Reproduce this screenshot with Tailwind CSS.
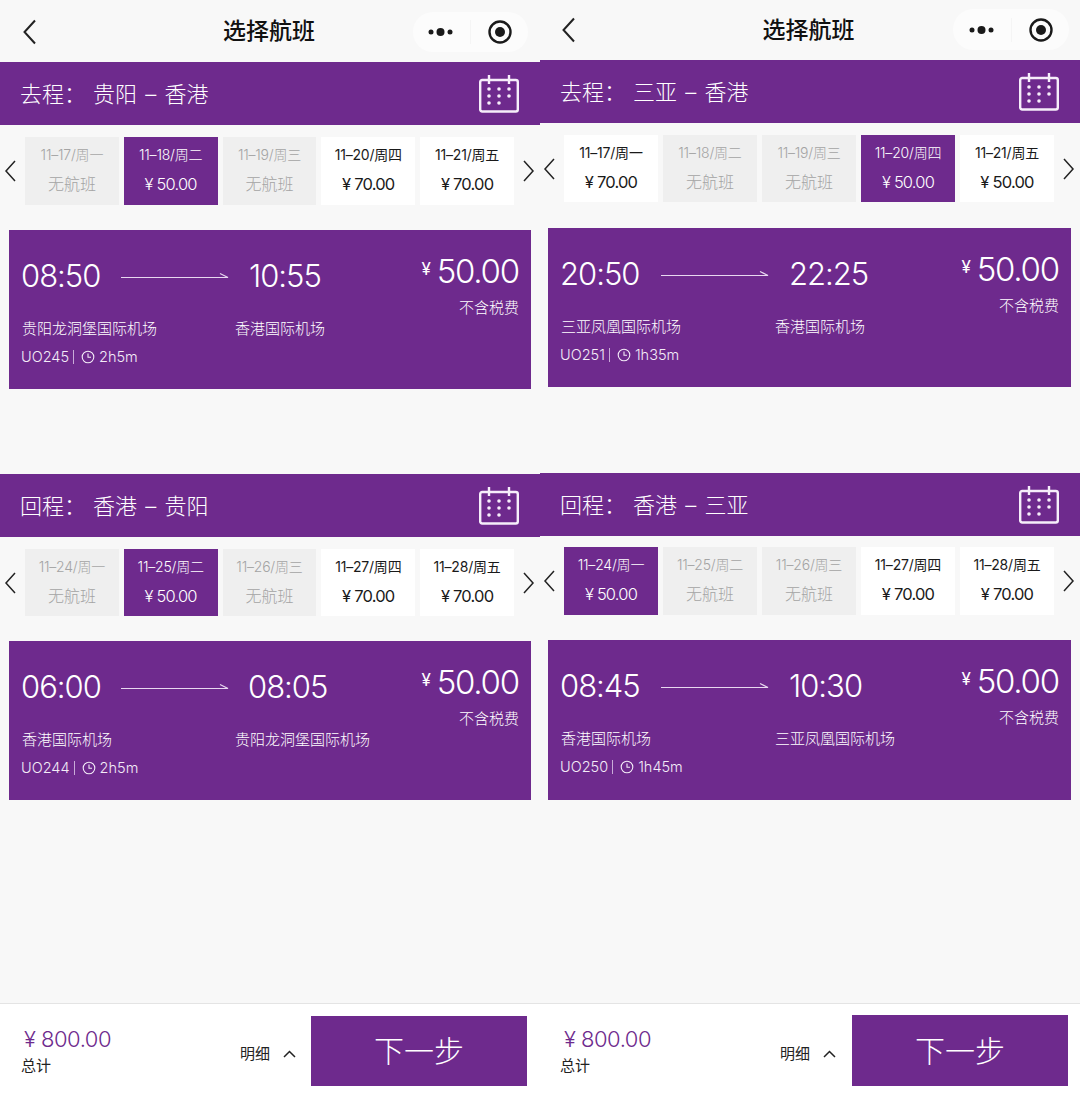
<!doctype html>
<html lang="zh">
<head>
<meta charset="utf-8">
<script src="https://cdn.jsdelivr.net/npm/@tailwindcss/browser@4"></script>
<title>选择航班</title>
</head>
<body class="m-0 bg-[#f8f8f8]">
<div class="flex w-[1080px] h-[1097px] overflow-hidden font-['Inter','Noto_Sans_CJK_SC',sans-serif]">

<!-- LEFT -->
<section class="w-[540px] h-full flex flex-col bg-[#f8f8f8]">
  <header class="h-[62px] shrink-0 relative flex items-center justify-center">
    <svg class="absolute left-[22px] top-[19px]" width="16" height="26" viewBox="0 0 16 26" fill="none" stroke="#222" stroke-width="2"><path d="M13 1.500 2.500 13 13 24.500"/></svg>
    <span class="pr-[2px] text-[23px] font-medium leading-none text-[#111]">选择航班</span>
    <div class="absolute left-[413px] top-[12px] w-[115px] h-[40px] rounded-full bg-[#fcfcfc] flex items-center">
      <svg class="ml-[14px]" width="28" height="12" viewBox="0 0 28 12" fill="#1a1a1a"><circle cx="4" cy="6" r="2.500"/><circle cx="13.500" cy="6" r="4"/><circle cx="23" cy="6" r="2.500"/></svg>
      <span class="ml-[15px] w-px h-[24px] bg-[#f5f5f5]"></span>
      <svg class="ml-[16px]" width="26" height="26" viewBox="0 0 26 26"><circle cx="13" cy="13" r="10.500" fill="none" stroke="#1a1a1a" stroke-width="2.400"/><circle cx="13" cy="13" r="5" fill="#1a1a1a"/></svg>
    </div>
  </header>

  <div class="h-[63px] shrink-0 bg-[#6e2a8d] flex items-center justify-between pl-[20px] pr-[21px] text-white">
    <div class="flex text-[22px] font-light leading-none text-white [word-spacing:2px]"><span class="w-[73px]">去程：</span><span>贵阳 – 香港</span></div>
    <svg width="40" height="38" viewBox="0 0 40 38" fill="none" stroke="#f6eefa" stroke-width="2.400"><rect x="1.200" y="5" width="37.600" height="31.500" rx="2"/><path d="M10 0v9M30 0v9"/><g fill="#f6eefa" stroke="none"><circle cx="10" cy="14" r="1.800"/><circle cx="20" cy="14" r="1.800"/><circle cx="30" cy="14" r="1.800"/><circle cx="10" cy="21" r="1.800"/><circle cx="20" cy="21" r="1.800"/><circle cx="30" cy="21" r="1.800"/><circle cx="10" cy="28" r="1.800"/><circle cx="20" cy="28" r="1.800"/></g></svg>
  </div>

  <div class="mt-[12px] h-[68px] shrink-0 flex items-center">
    <svg class="w-[25px] shrink-0" width="25" height="22" viewBox="0 0 25 22" fill="none" stroke="#222" stroke-width="1.500"><path d="M15 1 6 11l9 10"/></svg>
    <div class="flex gap-[5px]">
      <div class="w-[93.800px] h-[68px] pb-px flex flex-col items-center justify-center bg-[#efefef] text-[#a4a4a4]"><span class="text-[14px] font-light leading-[20px] tracking-[-0.2px]">11–17/周一</span><span class="text-[16px] font-light leading-[24px] mt-[7px]">无航班</span></div>
      <div class="w-[93.800px] h-[68px] pb-px flex flex-col items-center justify-center bg-[#6e2a8d] text-white"><span class="text-[14px] font-light leading-[20px] tracking-[-0.2px]">11–18/周二</span><span class="text-[16.500px] font-light tracking-[-0.8px] leading-[24px] mt-[7px]">¥ 50.00</span></div>
      <div class="w-[93.800px] h-[68px] pb-px flex flex-col items-center justify-center bg-[#efefef] text-[#a4a4a4]"><span class="text-[14px] font-light leading-[20px] tracking-[-0.2px]">11–19/周三</span><span class="text-[16px] font-light leading-[24px] mt-[7px]">无航班</span></div>
      <div class="w-[93.800px] h-[68px] pb-px flex flex-col items-center justify-center bg-white text-[#1a1a1a]"><span class="text-[14px] leading-[20px] tracking-[-0.2px]">11–20/周四</span><span class="text-[16.500px] tracking-[-0.8px] leading-[24px] mt-[7px]">¥ 70.00</span></div>
      <div class="w-[93.800px] h-[68px] pb-px flex flex-col items-center justify-center bg-white text-[#1a1a1a]"><span class="text-[14px] leading-[20px] tracking-[-0.2px]">11–21/周五</span><span class="text-[16.500px] tracking-[-0.8px] leading-[24px] mt-[7px]">¥ 70.00</span></div>
    </div>
    <svg class="w-[25px] shrink-0" width="25" height="22" viewBox="0 0 25 22" fill="none" stroke="#222" stroke-width="1.500"><path d="M10 1l9 10-9 10"/></svg>
  </div>

  <article class="mt-[25px] ml-[9px] w-[522px] h-[159px] shrink-0 bg-[#6e2a8d] flex justify-between px-[12px] text-white">
    <div>
      <div class="mt-[26px] h-[38px] flex items-center text-[31px] font-light tracking-[-1px] leading-none text-white">
        <span class="w-[100px]">08:50</span>
        <svg width="108" height="8" viewBox="0 0 108 8" fill="none" stroke="#e8d8f0" stroke-width="1.200"><path d="M0 6.500h107L99 2.500"/></svg>
        <span class="ml-[20px]">10:55</span>
      </div>
      <div class="mt-[24px] h-[22px] flex text-[15px] font-light leading-[22px] text-white"><span class="w-[214px] pl-px">贵阳龙洞堡国际机场</span><span>香港国际机场</span></div>
      <div class="mt-[7px] h-[20px] flex items-center text-[14.500px] font-light leading-none text-[#f4ecf8]">
        <span>UO245</span><span class="mx-[4px] w-px h-[14px] bg-[#c9abd8]"></span>
        <svg class="ml-[3px]" width="14" height="14" viewBox="0 0 14 14" fill="none" stroke="#f4ecf8" stroke-width="1.100"><circle cx="7" cy="7" r="5.800"/><path d="M7 3.500V7.300H10"/></svg>
        <span class="ml-[4px]">2h5m</span>
      </div>
    </div>
    <div class="flex flex-col items-end">
      <div class="mt-[21px] h-[40px] flex items-center text-[33px] font-light tracking-[-1.200px] leading-none text-white"><span class="text-[17px] font-normal mr-[7px] -mt-[3px]">¥</span>50.00</div>
      <span class="mt-[6px] h-[22px] text-[15px] font-light leading-[22px] text-white">不含税费</span>
    </div>
  </article>

  <div class="mt-[85px] h-[63px] shrink-0 bg-[#6e2a8d] flex items-center justify-between pl-[20px] pr-[21px] text-white">
    <div class="flex text-[22px] font-light leading-none text-white [word-spacing:2px]"><span class="w-[73px]">回程：</span><span>香港 – 贵阳</span></div>
    <svg width="40" height="38" viewBox="0 0 40 38" fill="none" stroke="#f6eefa" stroke-width="2.400"><rect x="1.200" y="5" width="37.600" height="31.500" rx="2"/><path d="M10 0v9M30 0v9"/><g fill="#f6eefa" stroke="none"><circle cx="10" cy="14" r="1.800"/><circle cx="20" cy="14" r="1.800"/><circle cx="30" cy="14" r="1.800"/><circle cx="10" cy="21" r="1.800"/><circle cx="20" cy="21" r="1.800"/><circle cx="30" cy="21" r="1.800"/><circle cx="10" cy="28" r="1.800"/><circle cx="20" cy="28" r="1.800"/></g></svg>
  </div>

  <div class="mt-[12px] h-[67px] shrink-0 flex items-center">
    <svg class="w-[25px] shrink-0" width="25" height="22" viewBox="0 0 25 22" fill="none" stroke="#222" stroke-width="1.500"><path d="M15 1 6 11l9 10"/></svg>
    <div class="flex gap-[5px]">
      <div class="w-[93.800px] h-[67px] pb-px flex flex-col items-center justify-center bg-[#efefef] text-[#a4a4a4]"><span class="text-[14px] font-light leading-[20px] tracking-[-0.2px]">11–24/周一</span><span class="text-[16px] font-light leading-[24px] mt-[7px]">无航班</span></div>
      <div class="w-[93.800px] h-[67px] pb-px flex flex-col items-center justify-center bg-[#6e2a8d] text-white"><span class="text-[14px] font-light leading-[20px] tracking-[-0.2px]">11–25/周二</span><span class="text-[16.500px] font-light tracking-[-0.8px] leading-[24px] mt-[7px]">¥ 50.00</span></div>
      <div class="w-[93.800px] h-[67px] pb-px flex flex-col items-center justify-center bg-[#efefef] text-[#a4a4a4]"><span class="text-[14px] font-light leading-[20px] tracking-[-0.2px]">11–26/周三</span><span class="text-[16px] font-light leading-[24px] mt-[7px]">无航班</span></div>
      <div class="w-[93.800px] h-[67px] pb-px flex flex-col items-center justify-center bg-white text-[#1a1a1a]"><span class="text-[14px] leading-[20px] tracking-[-0.2px]">11–27/周四</span><span class="text-[16.500px] tracking-[-0.8px] leading-[24px] mt-[7px]">¥ 70.00</span></div>
      <div class="w-[93.800px] h-[67px] pb-px flex flex-col items-center justify-center bg-white text-[#1a1a1a]"><span class="text-[14px] leading-[20px] tracking-[-0.2px]">11–28/周五</span><span class="text-[16.500px] tracking-[-0.8px] leading-[24px] mt-[7px]">¥ 70.00</span></div>
    </div>
    <svg class="w-[25px] shrink-0" width="25" height="22" viewBox="0 0 25 22" fill="none" stroke="#222" stroke-width="1.500"><path d="M10 1l9 10-9 10"/></svg>
  </div>

  <article class="mt-[25px] ml-[9px] w-[522px] h-[159px] shrink-0 bg-[#6e2a8d] flex justify-between px-[12px] text-white">
    <div>
      <div class="mt-[26px] h-[38px] flex items-center text-[31px] font-light tracking-[-1px] leading-none text-white">
        <span class="w-[100px]">06:00</span>
        <svg width="108" height="8" viewBox="0 0 108 8" fill="none" stroke="#e8d8f0" stroke-width="1.200"><path d="M0 6.500h107L99 2.500"/></svg>
        <span class="ml-[19px]">08:05</span>
      </div>
      <div class="mt-[24px] h-[22px] flex text-[15px] font-light leading-[22px] text-white"><span class="w-[214px] pl-px">香港国际机场</span><span>贵阳龙洞堡国际机场</span></div>
      <div class="mt-[7px] h-[20px] flex items-center text-[14.500px] font-light leading-none text-[#f4ecf8]">
        <span>UO244</span><span class="mx-[4px] w-px h-[14px] bg-[#c9abd8]"></span>
        <svg class="ml-[3px]" width="14" height="14" viewBox="0 0 14 14" fill="none" stroke="#f4ecf8" stroke-width="1.100"><circle cx="7" cy="7" r="5.800"/><path d="M7 3.500V7.300H10"/></svg>
        <span class="ml-[4px]">2h5m</span>
      </div>
    </div>
    <div class="flex flex-col items-end">
      <div class="mt-[21px] h-[40px] flex items-center text-[33px] font-light tracking-[-1.200px] leading-none text-white"><span class="text-[17px] font-normal mr-[7px] -mt-[3px]">¥</span>50.00</div>
      <span class="mt-[6px] h-[22px] text-[15px] font-light leading-[22px] text-white">不含税费</span>
    </div>
  </article>

  <footer class="mt-auto h-[94px] shrink-0 bg-white border-t border-[#e4e4e4] flex items-start relative">
    <div class="ml-[21px] w-[219px]">
      <div class="mt-[22px] h-[26px] text-[22px] font-light tracking-[-0.5px] leading-[26px] text-[#6e2a8d] pl-[3px]">¥ 800.00</div>
      <div class="mt-[4px] text-[15px] leading-[20px] text-[#222]">总计</div>
    </div>
    <div class="w-[71px] mt-[40px] flex items-center text-[15px] leading-[20px] text-[#222]">
      <span>明细</span>
      <svg class="ml-[13px]" width="13" height="8" viewBox="0 0 13 8" fill="none" stroke="#222" stroke-width="1.500"><path d="M1 7l5.500-5.500L12 7"/></svg>
    </div>
    <button class="mt-[12px] w-[216px] h-[70px] bg-[#6e2a8d] text-white text-[30px] font-light leading-none flex items-center justify-center">下一步</button>
  </footer>
</section>

<!-- RIGHT -->
<section class="w-[540px] h-full flex flex-col bg-[#f8f8f8]">
  <header class="h-[60px] shrink-0 relative flex items-center justify-center">
    <svg class="absolute left-[21px] top-[17px]" width="16" height="26" viewBox="0 0 16 26" fill="none" stroke="#222" stroke-width="2"><path d="M13 1.500 2.500 13 13 24.500"/></svg>
    <span class="pr-[3px] text-[23px] font-medium leading-none text-[#111]">选择航班</span>
    <div class="absolute left-[413px] top-[9px] w-[116px] h-[41px] rounded-full bg-[#fcfcfc] flex items-center">
      <svg class="ml-[15px]" width="28" height="12" viewBox="0 0 28 12" fill="#1a1a1a"><circle cx="4" cy="6" r="2.500"/><circle cx="13.500" cy="6" r="4"/><circle cx="23" cy="6" r="2.500"/></svg>
      <span class="ml-[15px] w-px h-[24px] bg-[#f5f5f5]"></span>
      <svg class="ml-[16px]" width="26" height="26" viewBox="0 0 26 26"><circle cx="13" cy="13" r="10.500" fill="none" stroke="#1a1a1a" stroke-width="2.400"/><circle cx="13" cy="13" r="5" fill="#1a1a1a"/></svg>
    </div>
  </header>

  <div class="h-[63px] shrink-0 bg-[#6e2a8d] flex items-center justify-between pl-[20px] pr-[21px] text-white">
    <div class="flex text-[22px] font-light leading-none text-white [word-spacing:2px]"><span class="w-[73px]">去程：</span><span>三亚 – 香港</span></div>
    <svg width="40" height="38" viewBox="0 0 40 38" fill="none" stroke="#f6eefa" stroke-width="2.400"><rect x="1.200" y="5" width="37.600" height="31.500" rx="2"/><path d="M10 0v9M30 0v9"/><g fill="#f6eefa" stroke="none"><circle cx="10" cy="14" r="1.800"/><circle cx="20" cy="14" r="1.800"/><circle cx="30" cy="14" r="1.800"/><circle cx="10" cy="21" r="1.800"/><circle cx="20" cy="21" r="1.800"/><circle cx="30" cy="21" r="1.800"/><circle cx="10" cy="28" r="1.800"/><circle cx="20" cy="28" r="1.800"/></g></svg>
  </div>

  <div class="mt-[12px] h-[67px] shrink-0 flex items-center">
    <svg class="w-[24px] shrink-0" width="24" height="22" viewBox="0 0 24 22" fill="none" stroke="#222" stroke-width="1.500"><path d="M14 1 5 11l9 10"/></svg>
    <div class="flex gap-[5px]">
      <div class="w-[94px] h-[67px] pb-px flex flex-col items-center justify-center bg-white text-[#1a1a1a]"><span class="text-[14px] leading-[20px] tracking-[-0.2px]">11–17/周一</span><span class="text-[16.500px] tracking-[-0.8px] leading-[24px] mt-[7px]">¥ 70.00</span></div>
      <div class="w-[94px] h-[67px] pb-px flex flex-col items-center justify-center bg-[#efefef] text-[#a4a4a4]"><span class="text-[14px] font-light leading-[20px] tracking-[-0.2px]">11–18/周二</span><span class="text-[16px] font-light leading-[24px] mt-[7px]">无航班</span></div>
      <div class="w-[94px] h-[67px] pb-px flex flex-col items-center justify-center bg-[#efefef] text-[#a4a4a4]"><span class="text-[14px] font-light leading-[20px] tracking-[-0.2px]">11–19/周三</span><span class="text-[16px] font-light leading-[24px] mt-[7px]">无航班</span></div>
      <div class="w-[94px] h-[67px] pb-px flex flex-col items-center justify-center bg-[#6e2a8d] text-white"><span class="text-[14px] font-light leading-[20px] tracking-[-0.2px]">11–20/周四</span><span class="text-[16.500px] font-light tracking-[-0.8px] leading-[24px] mt-[7px]">¥ 50.00</span></div>
      <div class="w-[94px] h-[67px] pb-px flex flex-col items-center justify-center bg-white text-[#1a1a1a]"><span class="text-[14px] leading-[20px] tracking-[-0.2px]">11–21/周五</span><span class="text-[16.500px] tracking-[-0.8px] leading-[24px] mt-[7px]">¥ 50.00</span></div>
    </div>
    <svg class="w-[25px] shrink-0" width="25" height="22" viewBox="0 0 25 22" fill="none" stroke="#222" stroke-width="1.500"><path d="M10 1l9 10-9 10"/></svg>
  </div>

  <article class="mt-[26px] ml-[8px] w-[523px] h-[159px] shrink-0 bg-[#6e2a8d] flex justify-between px-[12px] text-white">
    <div>
      <div class="mt-[26px] h-[38px] flex items-center text-[31px] font-light tracking-[-1px] leading-none text-white">
        <span class="w-[101px]">20:50</span>
        <svg width="108" height="8" viewBox="0 0 108 8" fill="none" stroke="#e8d8f0" stroke-width="1.200"><path d="M0 6.500h107L99 2.500"/></svg>
        <span class="ml-[20px]">22:25</span>
      </div>
      <div class="mt-[24px] h-[22px] flex text-[15px] font-light leading-[22px] text-white"><span class="w-[215px] pl-px">三亚凤凰国际机场</span><span>香港国际机场</span></div>
      <div class="mt-[7px] h-[20px] flex items-center text-[14.500px] font-light leading-none text-[#f4ecf8]">
        <span>UO251</span><span class="mx-[4px] w-px h-[14px] bg-[#c9abd8]"></span>
        <svg class="ml-[3px]" width="14" height="14" viewBox="0 0 14 14" fill="none" stroke="#f4ecf8" stroke-width="1.100"><circle cx="7" cy="7" r="5.800"/><path d="M7 3.500V7.300H10"/></svg>
        <span class="ml-[4px]">1h35m</span>
      </div>
    </div>
    <div class="flex flex-col items-end">
      <div class="mt-[21px] h-[40px] flex items-center text-[33px] font-light tracking-[-1.200px] leading-none text-white"><span class="text-[17px] font-normal mr-[7px] -mt-[3px]">¥</span>50.00</div>
      <span class="mt-[6px] h-[22px] text-[15px] font-light leading-[22px] text-white">不含税费</span>
    </div>
  </article>

  <div class="mt-[86px] h-[63px] shrink-0 bg-[#6e2a8d] flex items-center justify-between pl-[20px] pr-[21px] text-white">
    <div class="flex text-[22px] font-light leading-none text-white [word-spacing:2px]"><span class="w-[73px]">回程：</span><span>香港 – 三亚</span></div>
    <svg width="40" height="38" viewBox="0 0 40 38" fill="none" stroke="#f6eefa" stroke-width="2.400"><rect x="1.200" y="5" width="37.600" height="31.500" rx="2"/><path d="M10 0v9M30 0v9"/><g fill="#f6eefa" stroke="none"><circle cx="10" cy="14" r="1.800"/><circle cx="20" cy="14" r="1.800"/><circle cx="30" cy="14" r="1.800"/><circle cx="10" cy="21" r="1.800"/><circle cx="20" cy="21" r="1.800"/><circle cx="30" cy="21" r="1.800"/><circle cx="10" cy="28" r="1.800"/><circle cx="20" cy="28" r="1.800"/></g></svg>
  </div>

  <div class="mt-[11px] h-[68px] shrink-0 flex items-center">
    <svg class="w-[24px] shrink-0" width="24" height="22" viewBox="0 0 24 22" fill="none" stroke="#222" stroke-width="1.500"><path d="M14 1 5 11l9 10"/></svg>
    <div class="flex gap-[5px]">
      <div class="w-[94px] h-[68px] pb-px flex flex-col items-center justify-center bg-[#6e2a8d] text-white"><span class="text-[14px] font-light leading-[20px] tracking-[-0.2px]">11–24/周一</span><span class="text-[16.500px] font-light tracking-[-0.8px] leading-[24px] mt-[7px]">¥ 50.00</span></div>
      <div class="w-[94px] h-[68px] pb-px flex flex-col items-center justify-center bg-[#efefef] text-[#a4a4a4]"><span class="text-[14px] font-light leading-[20px] tracking-[-0.2px]">11–25/周二</span><span class="text-[16px] font-light leading-[24px] mt-[7px]">无航班</span></div>
      <div class="w-[94px] h-[68px] pb-px flex flex-col items-center justify-center bg-[#efefef] text-[#a4a4a4]"><span class="text-[14px] font-light leading-[20px] tracking-[-0.2px]">11–26/周三</span><span class="text-[16px] font-light leading-[24px] mt-[7px]">无航班</span></div>
      <div class="w-[94px] h-[68px] pb-px flex flex-col items-center justify-center bg-white text-[#1a1a1a]"><span class="text-[14px] leading-[20px] tracking-[-0.2px]">11–27/周四</span><span class="text-[16.500px] tracking-[-0.8px] leading-[24px] mt-[7px]">¥ 70.00</span></div>
      <div class="w-[94px] h-[68px] pb-px flex flex-col items-center justify-center bg-white text-[#1a1a1a]"><span class="text-[14px] leading-[20px] tracking-[-0.2px]">11–28/周五</span><span class="text-[16.500px] tracking-[-0.8px] leading-[24px] mt-[7px]">¥ 70.00</span></div>
    </div>
    <svg class="w-[25px] shrink-0" width="25" height="22" viewBox="0 0 25 22" fill="none" stroke="#222" stroke-width="1.500"><path d="M10 1l9 10-9 10"/></svg>
  </div>

  <article class="mt-[25px] ml-[8px] w-[523px] h-[160px] shrink-0 bg-[#6e2a8d] flex justify-between px-[12px] text-white">
    <div>
      <div class="mt-[26px] h-[38px] flex items-center text-[31px] font-light tracking-[-1px] leading-none text-white">
        <span class="w-[101px]">08:45</span>
        <svg width="108" height="8" viewBox="0 0 108 8" fill="none" stroke="#e8d8f0" stroke-width="1.200"><path d="M0 6.500h107L99 2.500"/></svg>
        <span class="ml-[20px]">10:30</span>
      </div>
      <div class="mt-[24px] h-[22px] flex text-[15px] font-light leading-[22px] text-white"><span class="w-[215px] pl-px">香港国际机场</span><span>三亚凤凰国际机场</span></div>
      <div class="mt-[7px] h-[20px] flex items-center text-[14.500px] font-light leading-none text-[#f4ecf8]">
        <span>UO250</span><span class="mx-[4px] w-px h-[14px] bg-[#c9abd8]"></span>
        <svg class="ml-[3px]" width="14" height="14" viewBox="0 0 14 14" fill="none" stroke="#f4ecf8" stroke-width="1.100"><circle cx="7" cy="7" r="5.800"/><path d="M7 3.500V7.300H10"/></svg>
        <span class="ml-[4px]">1h45m</span>
      </div>
    </div>
    <div class="flex flex-col items-end">
      <div class="mt-[21px] h-[40px] flex items-center text-[33px] font-light tracking-[-1.200px] leading-none text-white"><span class="text-[17px] font-normal mr-[7px] -mt-[3px]">¥</span>50.00</div>
      <span class="mt-[6px] h-[22px] text-[15px] font-light leading-[22px] text-white">不含税费</span>
    </div>
  </article>

  <footer class="mt-auto h-[94px] shrink-0 bg-white border-t border-[#e4e4e4] flex items-start relative">
    <div class="ml-[20px] w-[220px]">
      <div class="mt-[22px] h-[26px] text-[22px] font-light tracking-[-0.5px] leading-[26px] text-[#6e2a8d] pl-[4px]">¥ 800.00</div>
      <div class="mt-[4px] text-[15px] leading-[20px] text-[#222]">总计</div>
    </div>
    <div class="w-[72px] mt-[40px] flex items-center text-[15px] leading-[20px] text-[#222]">
      <span>明细</span>
      <svg class="ml-[13px]" width="13" height="8" viewBox="0 0 13 8" fill="none" stroke="#222" stroke-width="1.500"><path d="M1 7l5.500-5.500L12 7"/></svg>
    </div>
    <button class="mt-[11px] w-[216px] h-[71px] bg-[#6e2a8d] text-white text-[30px] font-light leading-none flex items-center justify-center">下一步</button>
  </footer>
</section>
</div>
</body>
</html>
